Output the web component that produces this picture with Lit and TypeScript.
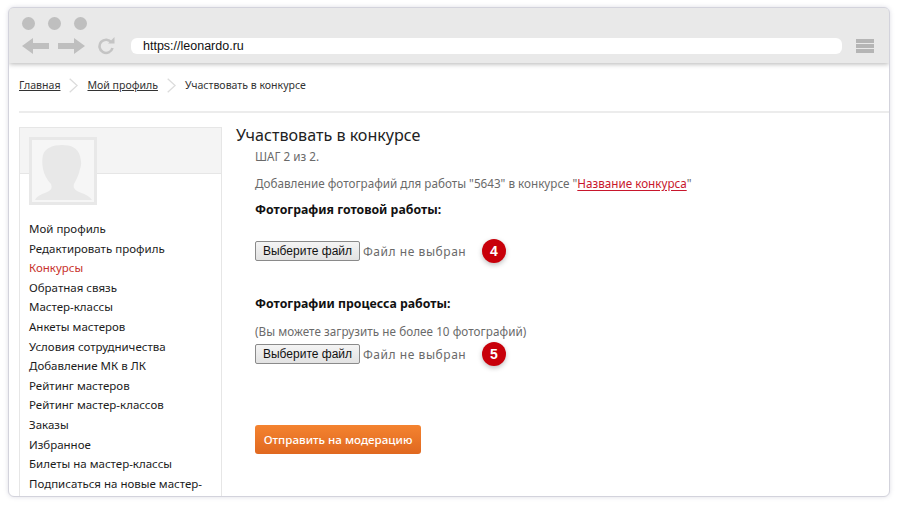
import { LitElement, html, css } from "lit";
import { customElement } from "lit/decorators.js";

const NAV = ["Мой профиль","Редактировать профиль","Конкурсы","Обратная связь","Мастер-классы","Анкеты мастеров","Условия сотрудничества","Добавление МК в ЛК","Рейтинг мастеров","Рейтинг мастер-классов","Заказы","Избранное","Билеты на мастер-классы","Подписаться на новые мастер-"];

@customElement("app-root")
export class AppRoot extends LitElement {
  static styles = css`
    :host { display: block; width: 898px; height: 506px; padding: 7px 8px 9px 8px; box-sizing: border-box; background: #fff; overflow: hidden; font-family: "Noto Sans", sans-serif; }
    .frame { height: 100%; box-sizing: border-box; border: 1px solid #d3d3dc; border-radius: 6px; background: #fff; overflow: hidden; display: flex; flex-direction: column; box-shadow: 0 0 4px rgba(120,120,150,.25); }
    .chrome { height: 55px; flex: none; background: #e9e9e9; box-shadow: 0 1px 5px rgba(0,0,0,.3); display: flex; flex-direction: column; padding: 9px 0 0 13px; box-sizing: border-box; position: relative; }
    .dots { display: flex; gap: 13px; }
    .dots i { width: 13px; height: 13px; border-radius: 50%; background: #bfbfbf; }
    .tools { display: flex; align-items: center; margin-top: 4px; height: 24px; }
    .tools svg { display: block; flex: none; }
    .b2 { margin-left: 9px; }
    .b3 { margin-left: 12px; }
    .url { flex: none; width: 711px; height: 16px; border-radius: 6px; background: #fff; margin-left: 15px; padding-left: 12px; box-sizing: border-box; font: 12.5px/16px "Liberation Sans", sans-serif; color: #111; }
    .menu { margin-left: 14px; display: flex; flex-direction: column; gap: 1px; }
    .menu i { display: block; width: 18px; height: 4px; background: #b5b5b5; }
    .crumbs { height: 48px; padding-bottom: 4px; margin: 0 0 0 10px; flex: none; display: flex; align-items: center; font-size: 10.55px; color: #333; box-sizing: border-box; }
    .crumbs a { color: #333; text-decoration: underline; }
    .crumbs svg { margin: 0 9px; flex: none; }
    .rule { height: 2px; background: #ececec; margin-left: 10px; flex: none; }
    .body { flex: 1; min-height: 0; display: flex; padding: 14px 0 0 10px; overflow: hidden; }
    .side { width: 203px; flex: none; box-sizing: border-box; border: 1px solid #e6e6e6; border-bottom: 0; padding: 0; }
    .band { height: 46px; background: #f4f4f4; border-bottom: 1px solid #e6e6e6; padding: 9px 0 0 9px; box-sizing: border-box; }
    .ava { width: 68px; height: 68px; box-sizing: border-box; border: 3px solid #e8e8e8; background: #f6f6f6; display: block; }
    .nav { margin-top: 45px; padding-left: 9px; display: flex; flex-direction: column; font-size: 11.5px; line-height: 19.6px; color: #1c1c1c; white-space: nowrap; }
    .nav .on { color: #c8322c; }
    .main { flex: 1; padding-left: 14px; min-width: 0; color: #6a6a6a; font-size: 11.7px; }
    h1 { margin: 0; font: 400 16.1px/16px "Noto Sans", sans-serif; color: #222; }
    .in { padding-left: 19px; }
    .step { line-height: 16px; margin-top: 5px; }
    .add { margin-top: 11px; line-height: 16px; }
    .add a { color: #c8162c; text-decoration: underline; text-underline-offset: 2px; }
    b { display: block; color: #111; line-height: 16px; font-weight: 700; font-size: 12.3px; }
    .t1 { margin-top: 11px; }
    .t2 { margin-top: 33px; }
    .row { display: flex; align-items: center; }
    .r1 { margin-top: 21px; }
    .r2 { margin-top: 3px; }
    .btn { width: 105px; height: 20px; box-sizing: border-box; border: 1px solid #8a8a8a; border-radius: 2px; background: linear-gradient(#f4f4f4,#e2e2e2); font: 12px/18px "Liberation Sans", sans-serif; color: #111; text-align: center; }
    .fn { margin-left: 3px; font-size: 12px; letter-spacing: .55px; color: #6a6a6a; width: 119px; white-space: nowrap; }
    .num { width: 24px; height: 24px; border-radius: 50%; background: #c8000a; color: #fff; font: 700 14px/24px "Liberation Sans", sans-serif; text-align: center; box-shadow: 0 2px 5px rgba(0,0,0,.25); }
    .send { display: block; width: 166px; height: 29px; border-radius: 3px; background: linear-gradient(#f4832f,#e06820); color: #fff; font-size: 11.6px; font-weight: 500; line-height: 29px; text-align: center; margin-top: 59px; }
    .note { line-height: 16px; margin-top: 11px; letter-spacing: .05px; }
  `;
  render() {
    const chev = html`<svg width="9" height="15" viewBox="0 0 9 15"><path d="M.7.7l7.4 6.8-7.4 6.8" fill="none" stroke="#dcdcdc" stroke-width="1.3"/></svg>`;
    return html`<div class="frame">
      <div class="chrome">
        <div class="dots"><i></i><i></i><i></i></div>
        <div class="tools">
          <svg width="27" height="16" viewBox="0 0 27 16"><path d="M0 8 11 0v5h16v6H11v5z" fill="#bfbfbf"/></svg>
          <svg class="b2" width="27" height="16" viewBox="0 0 27 16"><path d="M27 8 16 0v5H0v6h16v5z" fill="#bfbfbf"/></svg>
          <svg class="b3" width="19" height="18" viewBox="0 0 19 18"><path d="M14.5 5.5A6.6 6.6 0 1 0 15.5 11" fill="none" stroke="#c4c4c4" stroke-width="2.6"/><path d="M11 6.5h6.5V0z" fill="#c4c4c4"/></svg>
          <div class="url">https://leonardo.ru</div>
          <div class="menu"><i></i><i></i><i></i></div>
        </div>
      </div>
      <div class="crumbs">
        <a>Главная</a>${chev}<a>Мой профиль</a>${chev}<span>Участвовать в конкурсе</span>
      </div>
      <div class="rule"></div>
      <div class="body">
        <div class="side">
          <div class="band">
            <svg class="ava" viewBox="3 3 62 62"><path d="M14 18C16 11 24 8 33 8 42 8 49 11 51 19 52 24 53 27 51 32 50 38 47 43 45 47 44 50 45 52 48 54 54 57 60 58 63 63H6C8 58 15 57 20 54 23 52 23 50 22 47 18 43 15 37 14 32 13 27 13 22 14 18Z" fill="#e8e8e8"/></svg>
          </div>
          <div class="nav">${NAV.map((n) => html`<span class=${n === "Конкурсы" ? "on" : ""}>${n}</span>`)}</div>
        </div>
        <div class="main">
          <h1>Участвовать в конкурсе</h1>
          <div class="in">
            <div class="step">ШАГ 2 из 2.</div>
            <div class="add">Добавление фотографий для работы "5643" в конкурсе "<a>Название конкурса</a>"</div>
            <b class="t1">Фотография готовой работы:</b>
            <div class="row r1"><div class="btn">Выберите файл</div><div class="fn">Файл не выбран</div><div class="num">4</div></div>
            <b class="t2">Фотографии процесса работы:</b>
            <div class="note">(Вы можете загрузить не более 10 фотографий)</div>
            <div class="row r2"><div class="btn">Выберите файл</div><div class="fn">Файл не выбран</div><div class="num">5</div></div>
            <div class="send">Отправить на модерацию</div>
          </div>
        </div>
      </div>
    </div>`;
  }
}
